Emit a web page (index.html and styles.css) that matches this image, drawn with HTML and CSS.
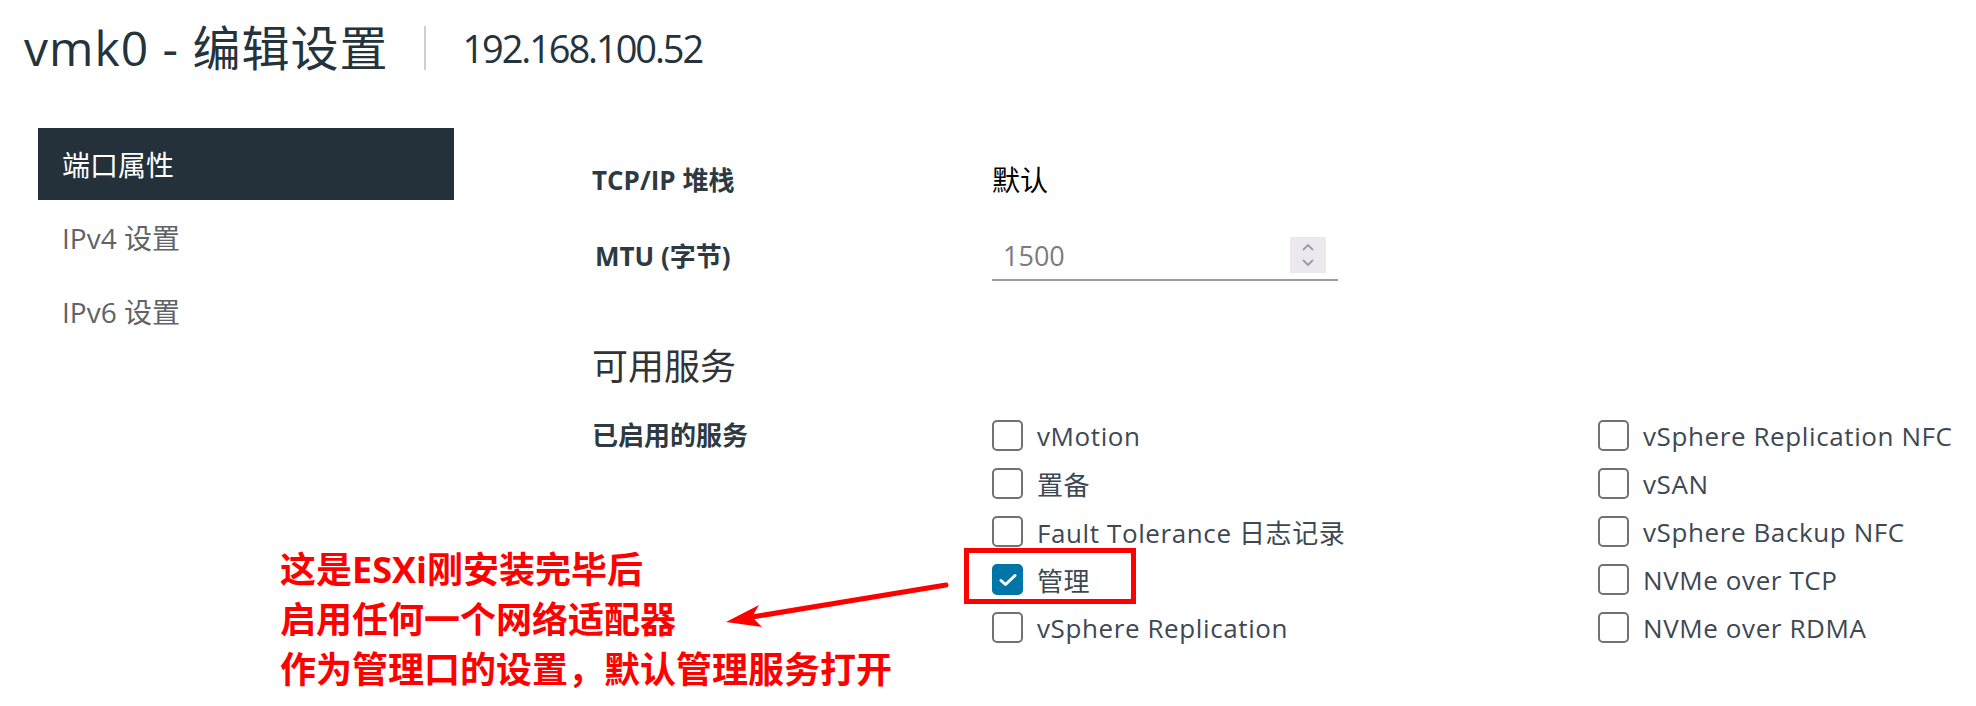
FILE: index.html
```html
<!DOCTYPE html>
<html lang="zh-CN">
<head>
<meta charset="utf-8">
<title>vmk0 - 编辑设置</title>
<link rel="stylesheet" href="styles.css">
</head>
<body>
<div class="page">
  <header class="header">
    <h1 class="title">vmk0 - 编辑设置</h1>
    <span class="sep"></span>
    <span class="host">192.168.100.52</span>
  </header>

  <div class="main">
    <nav class="nav">
      <div class="nav-item active">端口属性</div>
      <div class="nav-item">IPv4 设置</div>
      <div class="nav-item">IPv6 设置</div>
    </nav>

    <section class="form">
      <div class="row row-stack">
        <div class="label">TCP/IP 堆栈</div>
        <div class="value">默认</div>
      </div>
      <div class="row row-mtu">
        <div class="label label-mtu">MTU (字节)</div>
        <div class="input">
          <span class="input-text">1500</span>
          <span class="spinner">
            <svg width="14" height="26" viewBox="0 0 14 26"><path d="M2 8 L7 3 L12 8" fill="none" stroke="#9a9aa4" stroke-width="1.8"/><path d="M2 18 L7 23 L12 18" fill="none" stroke="#9a9aa4" stroke-width="1.8"/></svg>
          </span>
        </div>
      </div>
      <h2 class="section-title">可用服务</h2>
      <div class="row row-services">
        <div class="label label-services">已启用的服务</div>
        <div class="checks">
          <label class="check"><span class="box"></span><span class="check-text">vMotion</span></label>
          <label class="check"><span class="box"></span><span class="check-text">置备</span></label>
          <label class="check"><span class="box"></span><span class="check-text">Fault Tolerance 日志记录</span></label>
          <label class="check"><span class="box checked"><svg width="18" height="14" viewBox="0 0 18 14"><path d="M2 7.5 L6.5 11.5 L16 2.5" fill="none" stroke="#fff" stroke-width="3" stroke-linecap="round" stroke-linejoin="round"/></svg></span><span class="check-text">管理</span></label>
          <label class="check"><span class="box"></span><span class="check-text">vSphere Replication</span></label>
        </div>
        <div class="checks">
          <label class="check"><span class="box"></span><span class="check-text">vSphere Replication NFC</span></label>
          <label class="check"><span class="box"></span><span class="check-text">vSAN</span></label>
          <label class="check"><span class="box"></span><span class="check-text">vSphere Backup NFC</span></label>
          <label class="check"><span class="box"></span><span class="check-text">NVMe over TCP</span></label>
          <label class="check"><span class="box"></span><span class="check-text">NVMe over RDMA</span></label>
        </div>
      </div>
    </section>
  </div>

  <div class="note">这是ESXi刚安装完毕后<br>启用任何一个网络适配器<br>作为管理口的设置，默认管理服务打开</div>
  <div class="highlight"></div>
  <svg class="arrow" width="1976" height="706" viewBox="0 0 1976 706">
    <line x1="946" y1="585" x2="752" y2="617" stroke="#ff0000" stroke-width="5" stroke-linecap="round"/>
    <polygon points="726,622 762,627 752,617 759,605" fill="#ff0000"/>
  </svg>
</div>
</body>
</html>
```

FILE: styles.css
```css
* { box-sizing: border-box; }
html, body { margin: 0; padding: 0; background: #fff; }
body {
  font-family: "Open Sans", "Noto Sans CJK SC", sans-serif;
  color: #333;
}
.page {
  position: relative;
  width: 1976px;
  height: 706px;
  overflow: hidden;
}

/* header */
.header {
  display: flex;
  align-items: center;
  height: 95px;
  padding-left: 24px;
}
.title {
  margin: 0;
  font-size: 48px;
  font-weight: 400;
  line-height: 56px;
  color: #24333c;
  letter-spacing: 1px;
}
.sep {
  width: 2px;
  height: 44px;
  background: #cfcfcf;
  margin: 0 36px 0 36px;
}
.host {
  font-size: 38px;
  line-height: 44px;
  color: #24333c;
  letter-spacing: -2.1px;
}

/* main */
.main {
  display: flex;
  margin-top: 33px;
}
.nav {
  width: 416px;
  margin-left: 38px;
  display: flex;
  flex-direction: column;
  gap: 2px;
}
.nav-item {
  height: 72px;
  display: flex;
  align-items: center;
  padding-left: 24px;
  padding-bottom: 3px;
  font-size: 28px;
  color: #5f6468;
}
.nav-item.active {
  background: #24313b;
  color: #fff;
  padding-bottom: 0;
}

.form {
  margin-left: 138px;
  padding-top: 27px;
  width: 1380px;
}
.row {
  display: grid;
  grid-template-columns: 400px 606px 1fr;
}
.row-stack {
  height: 48px;
  align-items: center;
}
.label {
  font-size: 26px;
  font-weight: 700;
  color: #2e3a42;
}
.value {
  font-size: 28px;
  color: #000;
}
.row-mtu {
  margin-top: 28px;
  height: 50px;
  align-items: center;
}
.label-mtu { padding-left: 3px; padding-bottom: 2px; }
.input {
  width: 346px;
  height: 50px;
  border-bottom: 2px solid #9b9b9b;
  display: flex;
  align-items: center;
  justify-content: space-between;
  padding: 0 12px 0 11px;
}
.input-text {
  font-size: 27px;
  color: #7c7c7c;
}
.spinner {
  width: 36px;
  height: 36px;
  background: #ebe9ee;
  display: flex;
  align-items: center;
  justify-content: center;
}

.section-title {
  margin: 64px 0 0 0;
  height: 44px;
  line-height: 44px;
  font-size: 36px;
  font-weight: 400;
  color: #333;
}

.row-services {
  margin-top: 31px;
  align-items: start;
}
.label-services {
  line-height: 31px;
}
.checks {
  display: flex;
  flex-direction: column;
  gap: 17px;
}
.check {
  display: flex;
  align-items: center;
  height: 31px;
  gap: 14px;
}
.box {
  width: 31px;
  height: 31px;
  border: 2px solid #727272;
  border-radius: 5px;
  display: flex;
  align-items: center;
  justify-content: center;
}
.box.checked {
  background: #0076a8;
  border-color: #0076a8;
}
.check-text {
  font-size: 26px;
  color: #3d4852;
  letter-spacing: 0.6px;
  white-space: nowrap;
}

/* annotations */
.note {
  position: absolute;
  left: 280px;
  top: 545px;
  font-size: 36px;
  line-height: 50px;
  font-weight: 700;
  color: #ff0000;
  white-space: nowrap;
}
.highlight {
  position: absolute;
  left: 964px;
  top: 548px;
  width: 172px;
  height: 56px;
  border: 5px solid #ff0000;
}
.arrow {
  position: absolute;
  left: 0;
  top: 0;
  pointer-events: none;
}
```
